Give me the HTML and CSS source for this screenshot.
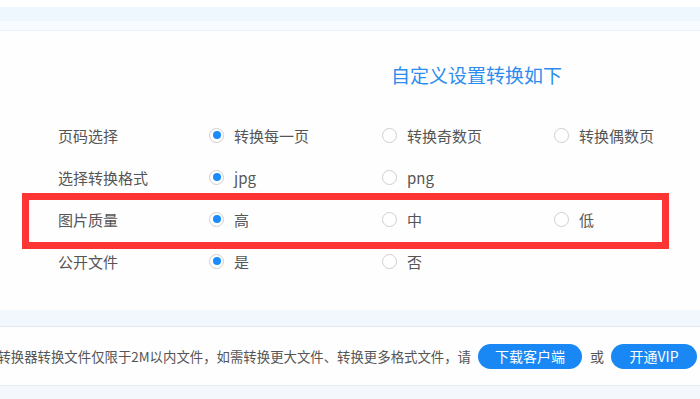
FILE: index.html
```html
<!DOCTYPE html>
<html lang="zh">
<head>
<meta charset="utf-8">
<link rel="stylesheet" href="styles.css">
</head>
<body>
<div class="top-band"><div class="band-a"></div><div class="band-b"></div></div>
<section class="panel">
  <h2 class="title">自定义设置转换如下</h2>
  <div class="rows">
    <div class="row">
      <span class="label">页码选择</span>
      <span class="opt"><i class="radio on"></i>转换每一页</span>
      <span class="opt"><i class="radio"></i>转换奇数页</span>
      <span class="opt"><i class="radio"></i>转换偶数页</span>
    </div>
    <div class="row">
      <span class="label">选择转换格式</span>
      <span class="opt"><i class="radio on"></i>jpg</span>
      <span class="opt"><i class="radio"></i>png</span>
    </div>
    <div class="row highlight">
      <span class="label">图片质量</span>
      <span class="opt"><i class="radio on"></i>高</span>
      <span class="opt"><i class="radio"></i>中</span>
      <span class="opt"><i class="radio"></i>低</span>
    </div>
    <div class="row">
      <span class="label">公开文件</span>
      <span class="opt"><i class="radio on"></i>是</span>
      <span class="opt"><i class="radio"></i>否</span>
    </div>
  </div>
</section>
<div class="band-mid"></div>
<div class="notice">
  <span class="notice-text">转换器转换文件仅限于2M以内文件，如需转换更大文件、转换更多格式文件，请</span>
  <a class="btn btn-dl">下载客户端</a>
  <span class="or">或</span>
  <a class="btn btn-vip">开通VIP</a>
</div>
<div class="band-bottom"></div>
</body>
</html>
```

FILE: styles.css
```css
html, body {
  margin: 0;
  padding: 0;
  background: #ffffff;
  font-family: "Noto Sans CJK SC", "Noto Sans", sans-serif;
  color: #555555;
  overflow: hidden;
}

.top-band {
  padding-top: 7px;
}
.band-a {
  height: 14px;
  background: #eef6fe;
}
.band-b {
  height: 9px;
  background: #f7fbff;
  border-bottom: 1px solid #eef3f9;
}

.panel {
  height: 279px;
  box-sizing: border-box;
  padding-top: 31px;
  background: #fefefe;
}
.title {
  margin: 0 0 0 391px;
  font-size: 19px;
  font-weight: normal;
  line-height: 26px;
  color: #2d8cf0;
}

.rows {
  margin-top: 26px;
}
.row {
  position: relative;
  display: grid;
  grid-template-columns: 151px 173px 172px auto;
  align-items: center;
  height: 42px;
  padding-left: 58px;
  font-size: 15px;
  color: #555555;
}
.label {
  white-space: nowrap;
}
.opt {
  display: flex;
  align-items: center;
  white-space: nowrap;
}
.radio {
  box-sizing: border-box;
  width: 15px;
  height: 15px;
  border: 1px solid #cfcfcf;
  border-radius: 50%;
  background: #fff;
  margin-right: 10px;
  display: flex;
  align-items: center;
  justify-content: center;
}
.radio.on::after {
  content: "";
  width: 8px;
  height: 8px;
  border-radius: 50%;
  background: #1a8cff;
}

.highlight::after {
  content: "";
  position: absolute;
  left: 22px;
  top: -5px;
  width: 647px;
  height: 56px;
  box-sizing: border-box;
  border: 7px solid #fe3535;
  pointer-events: none;
}

.band-mid {
  height: 16px;
  background: #f2f7fd;
  border-bottom: 1px solid #e4e8ee;
}
.notice {
  height: 58px;
  display: flex;
  align-items: center;
  justify-content: flex-end;
  padding-right: 3px;
  white-space: nowrap;
  background: #fefefe;
  border-bottom: 1px solid #e8ebef;
  font-size: 13.4px;
  color: #555555;
  overflow: hidden;
}
.notice-text {
  flex: none;
}
.btn {
  flex: none;
  display: flex;
  align-items: center;
  justify-content: center;
  height: 25px;
  border-radius: 13px;
  background: #1a88f4;
  color: #ffffff;
  font-size: 14px;
}
.btn-dl {
  width: 104px;
  margin-left: 7px;
}
.btn-vip {
  width: 86px;
}
.or {
  flex: none;
  margin: 0 7px 0 8px;
  font-size: 14px;
}
.band-bottom {
  height: 20px;
  background: #f4f8fd;
}
```
